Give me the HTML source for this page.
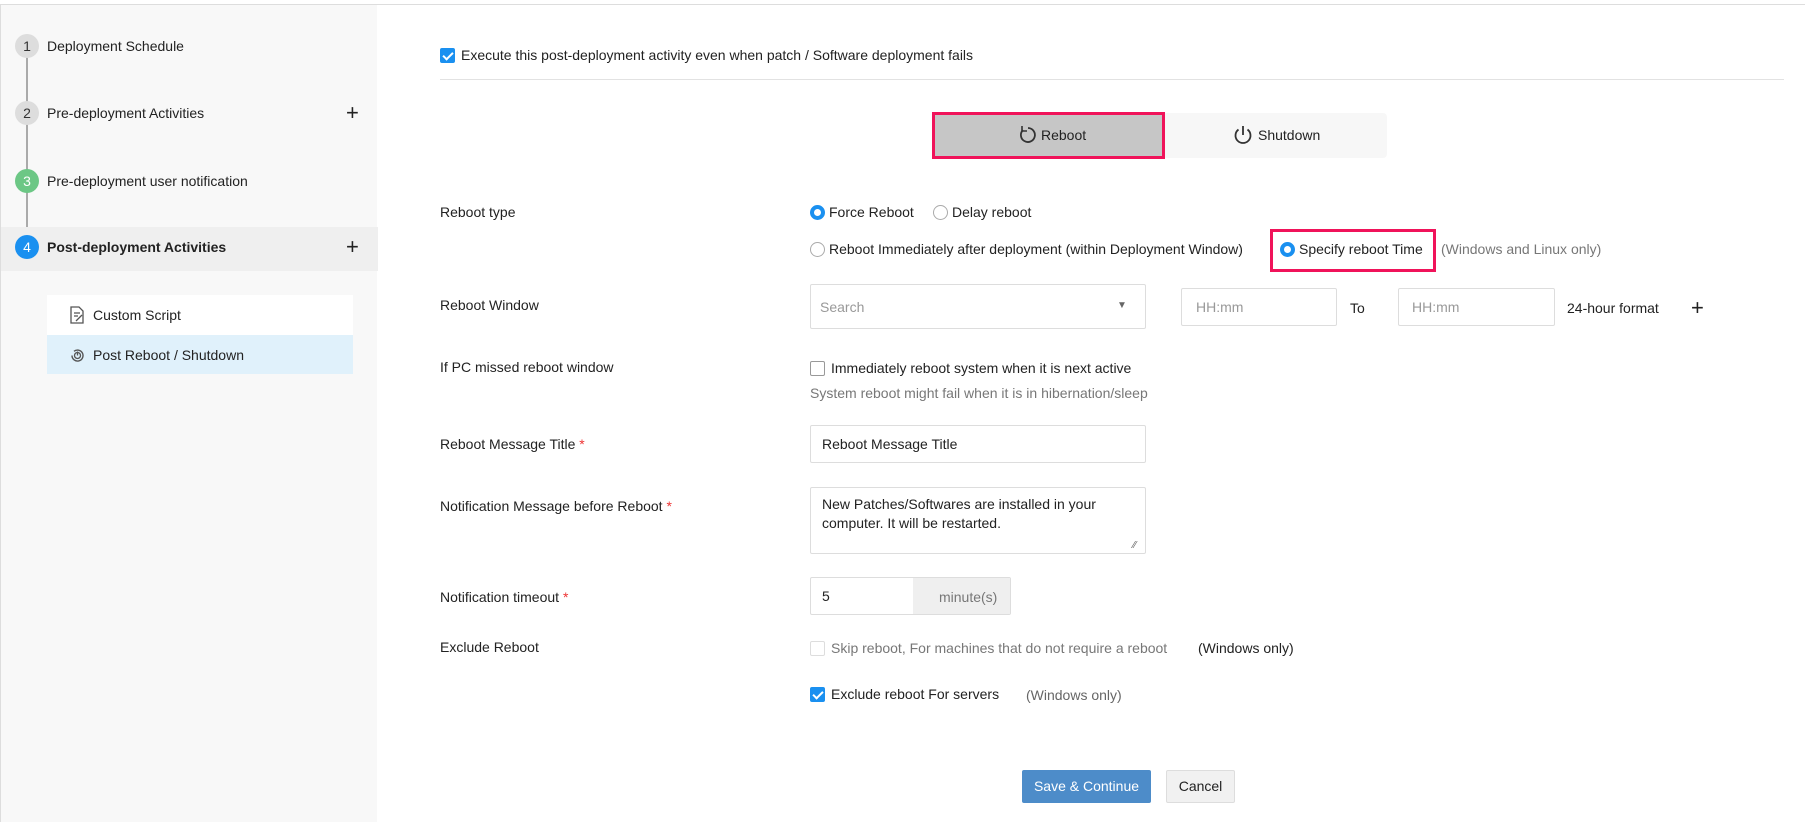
<!DOCTYPE html>
<html><head><meta charset="utf-8"><style>
*{box-sizing:border-box;margin:0;padding:0}
body{width:1805px;height:822px;overflow:hidden;background:#fff;font-family:"Liberation Sans",sans-serif;font-size:14px;color:#222;position:relative}
.a{position:absolute;white-space:nowrap}
.side{position:absolute;left:0;top:5px;width:377px;height:817px;background:#f8f8f8;border-left:1px solid #ddd}
.topline{position:absolute;left:0;top:4px;width:1805px;height:1px;background:#ddd}
.circ{position:absolute;width:24px;height:24px;border-radius:50%;background:#ddd;color:#333;text-align:center;line-height:24px;font-size:14px;left:14px}
.lbl{position:absolute;left:440px}
.box{position:absolute;border:1px solid #ddd;border-radius:2px;background:#fff}
.ph{color:#999}
.radio{display:inline-block;width:15px;height:15px;border-radius:50%;border:1px solid #aaa;vertical-align:-3px;margin-right:4px;background:#fff}
.radio.on{border:4px solid #1a90f0}
.cb{display:inline-block;width:15px;height:15px;border:1px solid #999;border-radius:2px;vertical-align:-3px;margin-right:6px;background:#fff}
.cb.on{background:#1a90f0;border-color:#1a90f0;position:relative}
.cb.on:after{content:"";position:absolute;left:4px;top:1px;width:4px;height:8px;border:solid #fff;border-width:0 2px 2px 0;transform:rotate(45deg)}
.req{color:#e33}
.plus{position:absolute;font-size:22px;line-height:22px}
</style></head><body>
<div class="topline"></div>
<div class="side">
  <div style="position:absolute;left:25px;top:42px;width:2px;height:200px;background:#aaa"></div>
  <div style="position:absolute;left:0;top:222px;width:377px;height:44px;background:#efefef"></div>
  <div class="circ" style="top:29px">1</div>
  <div class="a" style="left:46px;top:33px;font-size:14px">Deployment Schedule</div>
  <div class="circ" style="top:96px">2</div>
  <div class="a" style="left:46px;top:100px">Pre-deployment Activities</div>
  <div class="plus" style="left:345px;top:97px">+</div>
  <div class="circ" style="top:164px;background:#6cc785;color:#fff">3</div>
  <div class="a" style="left:46px;top:168px">Pre-deployment user notification</div>
  <div class="circ" style="top:230px;background:#1a90f0;color:#fff">4</div>
  <div class="a" style="left:46px;top:234px;font-weight:bold">Post-deployment Activities</div>
  <div class="plus" style="left:345px;top:231px">+</div>
  <div style="position:absolute;left:46px;top:290px;width:306px;height:40px;background:#fff"></div>
  <div style="position:absolute;left:46px;top:330px;width:306px;height:39px;background:#e0f1fb"></div>
  <svg class="a" style="left:68px;top:301px" width="16" height="18" viewBox="0 0 16 18"><path d="M2 1h8l4 4v12H2z" fill="none" stroke="#555" stroke-width="1.3"/><path d="M5 7h6M5 10h4M7 15l6-6" stroke="#555" stroke-width="1.3"/></svg>
  <div class="a" style="left:92px;top:302px">Custom Script</div>
  <svg class="a" style="left:68px;top:342px" width="17" height="17" viewBox="0 0 17 17"><path d="M3 8.5a5.5 5.5 0 1 0 2-4.2" fill="none" stroke="#555" stroke-width="1.4"/><circle cx="8.5" cy="8.5" r="3" fill="none" stroke="#555" stroke-width="1.3"/><path d="M8.5 4.5v4" stroke="#555" stroke-width="1.3"/></svg>
  <div class="a" style="left:92px;top:342px">Post Reboot / Shutdown</div>
</div>

<div class="a" style="left:440px;top:47px"><span class="cb on"></span>Execute this post-deployment activity even when patch / Software deployment fails</div>
<div style="position:absolute;left:440px;top:79px;width:1344px;height:1px;background:#e2e2e2"></div>

<div style="position:absolute;left:1160px;top:113px;width:227px;height:45px;background:#f7f7f7;border-radius:4px"></div>
<div style="position:absolute;left:932px;top:112px;width:233px;height:47px;background:#c6c6c6;border:3px solid #f0135a"></div>
<svg class="a" style="left:1017px;top:124px" width="22" height="22" viewBox="0 0 22 22"><path d="M6 6a7 7 0 1 0 5-2" fill="none" stroke="#333" stroke-width="1.8"/><path d="M5 2v5h5" fill="none" stroke="#333" stroke-width="1.6"/></svg>
<div class="a" style="left:1041px;top:127px">Reboot</div>
<svg class="a" style="left:1232px;top:124px" width="22" height="22" viewBox="0 0 22 22"><path d="M6.5 5.5a7.5 7.5 0 1 0 9 0" fill="none" stroke="#333" stroke-width="1.8"/><path d="M11 2v9" stroke="#333" stroke-width="1.8"/></svg>
<div class="a" style="left:1258px;top:127px">Shutdown</div>

<div class="lbl a" style="top:204px">Reboot type</div>
<div class="a" style="left:810px;top:204px"><span class="radio on"></span>Force Reboot</div>
<div class="a" style="left:933px;top:204px"><span class="radio"></span>Delay reboot</div>
<div class="a" style="left:810px;top:241px"><span class="radio"></span>Reboot Immediately after deployment (within Deployment Window)</div>
<div style="position:absolute;left:1270px;top:229px;width:166px;height:43px;border:3px solid #f0135a"></div>
<div class="a" style="left:1280px;top:241px"><span class="radio on"></span>Specify reboot Time</div>
<div class="a" style="left:1441px;top:241px;color:#777">(Windows and Linux only)</div>

<div class="lbl a" style="top:297px">Reboot Window</div>
<div class="box" style="left:810px;top:284px;width:336px;height:45px"></div>
<div class="a ph" style="left:820px;top:299px">Search</div>
<div class="a" style="left:1117px;top:300px;font-size:10px;color:#666">▼</div>
<div class="box" style="left:1181px;top:288px;width:156px;height:38px"></div>
<div class="a ph" style="left:1196px;top:299px">HH:mm</div>
<div class="a" style="left:1350px;top:300px">To</div>
<div class="box" style="left:1398px;top:288px;width:157px;height:38px"></div>
<div class="a ph" style="left:1412px;top:299px">HH:mm</div>
<div class="a" style="left:1567px;top:300px">24-hour format</div>
<div class="plus" style="left:1691px;top:297px">+</div>

<div class="lbl a" style="top:359px">If PC missed reboot window</div>
<div class="a" style="left:810px;top:360px"><span class="cb"></span>Immediately reboot system when it is next active</div>
<div class="a" style="left:810px;top:385px;color:#777">System reboot might fail when it is in hibernation/sleep</div>

<div class="lbl a" style="top:436px">Reboot Message Title <span class="req">*</span></div>
<div class="box" style="left:810px;top:425px;width:336px;height:38px"></div>
<div class="a" style="left:822px;top:436px">Reboot Message Title</div>

<div class="lbl a" style="top:498px">Notification Message before Reboot <span class="req">*</span></div>
<div class="box" style="left:810px;top:487px;width:336px;height:67px"></div>
<div class="a" style="left:822px;top:495px;line-height:19px">New Patches/Softwares are installed in your<br>computer. It will be restarted.</div>
<div class="a" style="left:1133px;top:540px;font-size:10px;color:#666">⁄⁄</div>

<div class="lbl a" style="top:589px">Notification timeout <span class="req">*</span></div>
<div class="box" style="left:810px;top:577px;width:201px;height:38px"></div>
<div style="position:absolute;left:913px;top:578px;width:97px;height:36px;background:#efefef"></div>
<div class="a" style="left:822px;top:588px">5</div>
<div class="a" style="left:939px;top:589px;color:#777">minute(s)</div>

<div class="lbl a" style="top:639px">Exclude Reboot</div>
<div class="a" style="left:810px;top:640px;color:#777"><span class="cb" style="border-color:#ddd"></span>Skip reboot, For machines that do not require a reboot</div>
<div class="a" style="left:1198px;top:640px">(Windows only)</div>
<div class="a" style="left:810px;top:686px"><span class="cb on"></span>Exclude reboot For servers</div>
<div class="a" style="left:1026px;top:687px;color:#666">(Windows only)</div>

<div style="position:absolute;left:1022px;top:770px;width:129px;height:33px;background:#4d8cc9;border-radius:2px;color:#fff;text-align:center;line-height:33px">Save &amp; Continue</div>
<div style="position:absolute;left:1166px;top:770px;width:69px;height:33px;background:#f1f1f1;border:1px solid #ddd;border-radius:2px;text-align:center;line-height:31px">Cancel</div>
</body></html>
